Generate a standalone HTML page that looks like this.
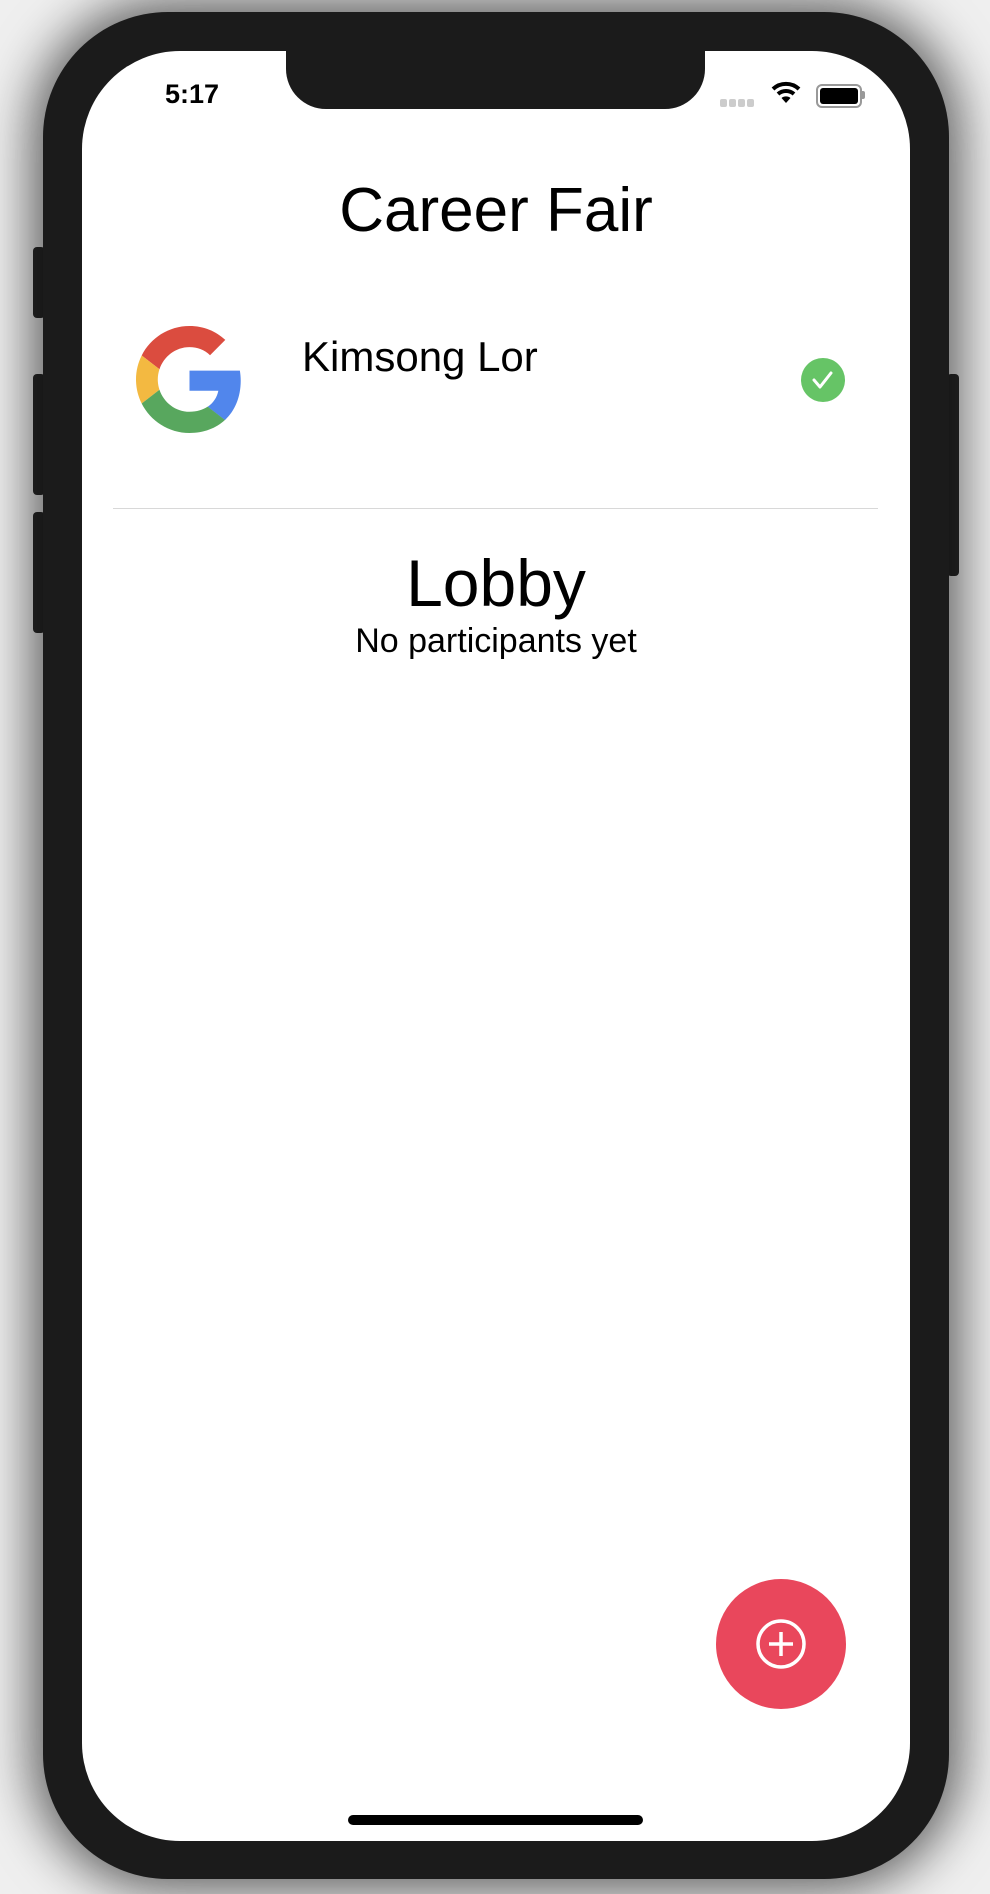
<!DOCTYPE html>
<html><head><meta charset="utf-8"><style>
html,body{margin:0;padding:0;}
body{width:990px;height:1894px;background:#efefef;position:relative;overflow:hidden;font-family:"Liberation Sans",sans-serif;}
.phone{position:absolute;left:43px;top:12px;width:906px;height:1867px;background:#1b1b1b;border-radius:125px;box-shadow:0 0 50px 12px rgba(0,0,0,.6);}
.btn{position:absolute;background:#2a2a2a;border-radius:4px;}
.screen{position:absolute;left:82px;top:51px;width:828px;height:1790px;background:#fff;border-radius:98px;overflow:hidden;}
.notch{position:absolute;left:204px;top:-5px;width:419px;height:63px;background:#1b1b1b;border-radius:0 0 40px 40px;}
.abs{position:absolute;}
</style></head><body>
<div class="btn" style="left:33px;top:247px;width:12px;height:71px"></div>
<div class="btn" style="left:33px;top:374px;width:12px;height:121px"></div>
<div class="btn" style="left:33px;top:512px;width:12px;height:121px"></div>
<div class="btn" style="left:947px;top:374px;width:12px;height:202px"></div>
<div class="phone"></div>
<div class="screen">
  <div class="notch"></div>
  <div class="abs" style="left:83px;top:28px;font-size:27px;font-weight:bold;color:#000">5:17</div>
  <div class="abs" style="left:638px;top:43px;">
    <span style="display:inline-block;width:7px;height:8px;background:#ccc;border-radius:2px;margin-right:2px"></span><span style="display:inline-block;width:7px;height:8px;background:#ccc;border-radius:2px;margin-right:2px"></span><span style="display:inline-block;width:7px;height:8px;background:#ccc;border-radius:2px;margin-right:2px"></span><span style="display:inline-block;width:7px;height:8px;background:#ccc;border-radius:2px"></span>
  </div>
  <svg class="abs" style="left:689px;top:30px" width="30" height="24" viewBox="0 0 30 24">
    <path d="M2 8 A19 19 0 0 1 28 8" stroke="#000" stroke-width="4" fill="none"/>
    <path d="M7 13 A12 12 0 0 1 23 13" stroke="#000" stroke-width="4" fill="none"/>
    <path d="M10.5 17 L15 22 L19.5 17 A7 7 0 0 0 10.5 17Z" fill="#000"/>
  </svg>
  <div class="abs" style="left:734px;top:33px;width:42px;height:20px;border:2px solid #999;border-radius:6px;"><div style="position:absolute;left:2px;top:2px;width:38px;height:16px;background:#000;border-radius:3px"></div></div>
  <div class="abs" style="left:780px;top:40px;width:3px;height:8px;background:#999;border-radius:0 2px 2px 0"></div>

  <div class="abs" style="left:0;width:828px;top:124px;text-align:center;font-size:62px;color:#000">Career Fair</div>

  <svg class="abs" style="left:54px;top:275px" width="107" height="107" viewBox="0 0 48 48">
    <path fill="#DB4C3F" d="M24 9.5c3.54 0 6.71 1.22 9.21 3.6l6.85-6.85C35.9 2.38 30.47 0 24 0 14.62 0 6.51 5.38 2.56 13.22l7.980 6.19C12.43 13.72 17.740 9.5 24 9.5z"/>
    <path fill="#5186EC" d="M46.98 24.55c0-1.57-.15-3.09-.38-4.55H24v9.02h12.94c-.58 2.96-2.26 5.48-4.78 7.18l7.73 6c4.51-4.18 7.09-10.36 7.09-17.65z"/>
    <path fill="#F3B941" d="M10.53 28.59c-.48-1.45-.76-2.99-.76-4.59s.27-3.14.76-4.59l-7.980-6.19C.92 16.46 0 20.12 0 24c0 3.88.92 7.54 2.56 10.78l7.97-6.19z"/>
    <path fill="#58A75E" d="M24 48c6.48 0 11.93-2.13 15.89-5.81l-7.73-6c-2.15 1.45-4.92 2.3-8.16 2.3-6.26 0-11.57-4.22-13.47-9.91l-7.980 6.19C6.51 42.62 14.62 48 24 48z"/>
  </svg>
  <div class="abs" style="left:220px;top:282px;font-size:42px;color:#000">Kimsong Lor</div>
  <div class="abs" style="left:719px;top:307px;width:44px;height:44px;border-radius:50%;background:#66c466"></div>
  <svg class="abs" style="left:719px;top:307px" width="44" height="44"><path d="M13 22 L19 29 L30 15" stroke="#fff" stroke-width="3" fill="none" stroke-linecap="round" stroke-linejoin="round"/></svg>

  <div class="abs" style="left:31px;top:457px;width:765px;height:1px;background:#d8d8d8"></div>
  <div class="abs" style="left:0;width:828px;top:494px;text-align:center;font-size:66px;color:#000">Lobby</div>
  <div class="abs" style="left:0;width:828px;top:571px;text-align:center;font-size:34px;color:#000">No participants yet</div>

  <div class="abs" style="left:634px;top:1528px;width:130px;height:130px;border-radius:50%;background:#e9475c"></div>
  <svg class="abs" style="left:634px;top:1528px" width="130" height="130"><circle cx="65" cy="65" r="23" stroke="#fff" stroke-width="3.5" fill="none"/><path d="M65 53 V77 M53 65 H77" stroke="#fff" stroke-width="3.5"/></svg>

  <div class="abs" style="left:266px;top:1764px;width:295px;height:10px;background:#000;border-radius:5px"></div>
</div>
</body></html>
